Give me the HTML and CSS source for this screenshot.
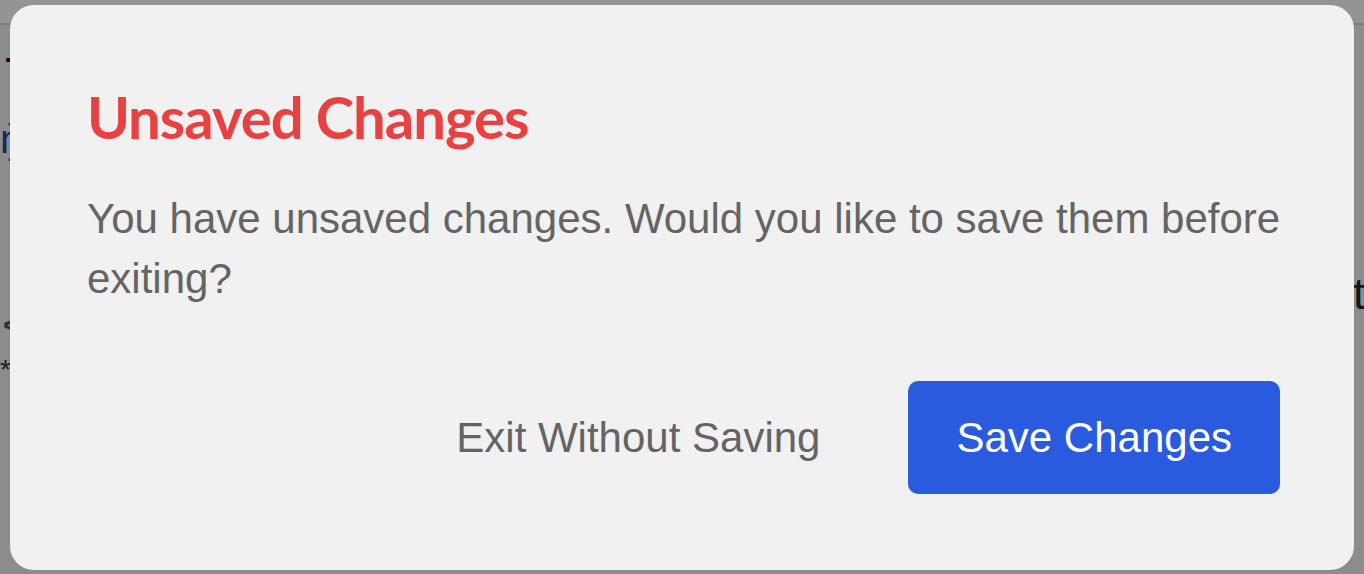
FILE: index.html
```html
<!DOCTYPE html>
<html lang="en">
<head>
<meta charset="utf-8">
<title>Unsaved Changes</title>
<link rel="stylesheet" href="styles.css">
</head>
<body>
<div class="page">
  <header class="page-header"></header>
  <main class="page-main">
    <div class="bg-row bg-dash">–</div>
    <div class="bg-row bg-link">n]</div>
    <div class="bg-row bg-arrow">&lt;</div>
    <div class="bg-row bg-star">*</div>
    <div class="bg-row bg-right">t</div>
  </main>
</div>
<div class="overlay">
  <div class="modal" role="dialog" aria-labelledby="modal-title">
    <h2 class="modal-title" id="modal-title">Unsaved Changes</h2>
    <p class="modal-text">You have unsaved changes. Would you like to save them before exiting?</p>
    <div class="modal-actions">
      <button class="btn btn-ghost" type="button">Exit Without Saving</button>
      <button class="btn btn-primary" type="button">Save Changes</button>
    </div>
  </div>
</div>
</body>
</html>
```
FILE: styles.css
```css
* { box-sizing: border-box; }
html, body { margin: 0; padding: 0; height: 100%; overflow: hidden; }
body {
  font-family: "Liberation Sans", Arial, Helvetica, sans-serif;
  background: #f2f2f2;
}
.page { height: 100%; }
.page-header {
  height: 25px;
  background: #ffffff;
  border-bottom: 2px solid #d8d8d8;
}
.bg-row { line-height: 1; white-space: nowrap; }
.bg-dash { color: #111; font-size: 40px; margin: 12px 0 0 5px; height: 40px; font-weight: bold; }
.bg-link { color: #2546a8; font-size: 40px; margin: 42px 0 0 0; height: 48px; letter-spacing: -14px; }
.bg-arrow { color: #555; font-size: 30px; margin: 143px 0 0 3px; height: 30px; font-weight: bold; }
.bg-star { color: #333; font-size: 28px; margin: 16px 0 0 0; }
.bg-right { color: #1b2a30; font-size: 44px; margin: -112px 0 0 1353px; }

.overlay {
  position: fixed;
  inset: 0;
  background: rgba(0, 0, 0, 0.42);
  display: flex;
  align-items: center;
  justify-content: center;
}
.modal {
  width: 1344px;
  background: #f1f1f1;
  border-radius: 24px;
  padding: 76px 74px 76px 77px;
}
.modal-title {
  margin: 0;
  font-family: Lato, "Open Sans", sans-serif;
  font-weight: 700;
  font-size: 58px;
  line-height: 72px;
  letter-spacing: -1px;
  color: #e84142;
}
.modal-text {
  margin: 36px -20px 0 0;
  font-size: 42px;
  line-height: 60px;
  color: #646464;
}
.modal-actions {
  margin-top: 72px;
  display: flex;
  justify-content: flex-end;
  gap: 40px;
}
.btn {
  font-family: "Liberation Sans", Arial, Helvetica, sans-serif;
  font-size: 42px;
  line-height: 63px;
  padding: 25px 48px;
  border: 0;
  border-radius: 10px;
  cursor: pointer;
}
.btn-ghost { background: transparent; color: #646464; }
.btn-primary { background: #2a5bdf; color: #ffffff; }
```
